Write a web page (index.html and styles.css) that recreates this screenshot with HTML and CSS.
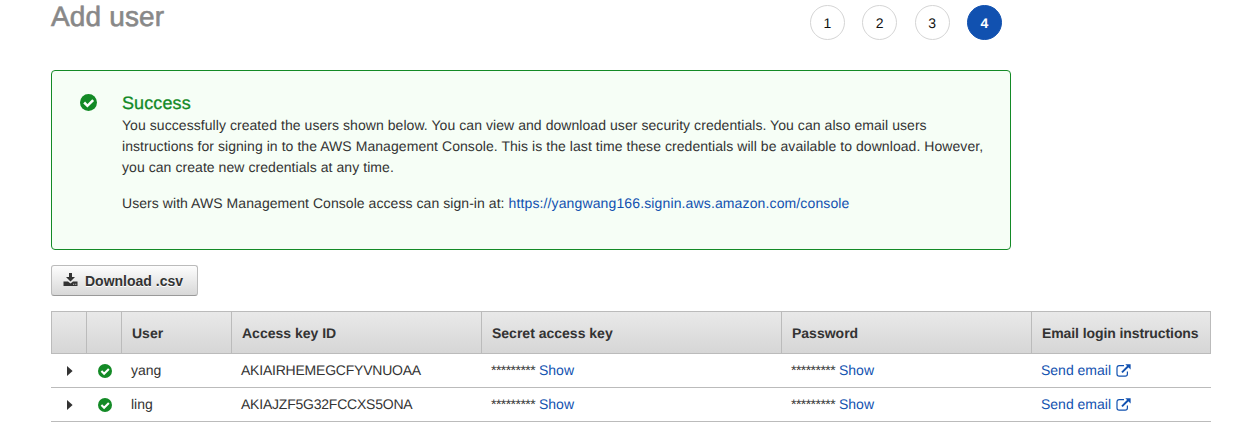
FILE: index.html
```html
<!DOCTYPE html>
<html lang="en">
<head>
<meta charset="utf-8">
<title>Add user</title>
<link rel="stylesheet" href="styles.css">
</head>
<body>
<svg class="sprite" width="0" height="0">
  <symbol id="check" viewBox="0 0 16 16"><circle cx="8" cy="8" r="8" fill="#138a26"/><path d="M3.9 8 7 11.1 12.4 5.7" fill="none" stroke="#fff" stroke-width="2.4"/></symbol>
  <symbol id="external" viewBox="0 0 15 13"><path d="M8 1.7H3.2Q1 1.7 1 3.9V10Q1 12.2 3.2 12.2H9.2Q11.4 12.2 11.4 10V7.6" fill="none" stroke="currentColor" stroke-width="1.2"/><path d="M6 8.4 12.4 2" stroke="currentColor" stroke-width="1.9"/><path d="M9.3.3H14.6V5.6Z" fill="currentColor"/></symbol>
</svg>
<header class="top">
  <h1 class="title">Add user</h1>
  <ol class="steps">
    <li class="step">1</li>
    <li class="step">2</li>
    <li class="step">3</li>
    <li class="step active">4</li>
  </ol>
</header>
<main>
  <section class="alert">
    <svg class="alert-icon"><use href="#check"/></svg>
    <div class="alert-body">
      <h2 class="alert-title">Success</h2>
      <p class="line">You successfully created the users shown below. You can view and download user security credentials. You can also email users<br>instructions for signing in to the AWS Management Console. This is the last time these credentials will be available to download. However,<br>you can create new credentials at any time.</p>
      <p class="line">Users with AWS Management Console access can sign-in at: <a class="signin" href="#">https://yangwang166.signin.aws.amazon.com/console</a></p>
    </div>
  </section>
  <button class="download">
    <svg class="download-icon" viewBox="0 0 15 13"><path fill="currentColor" d="M6 0H9V4H12L7.5 8.5 3 4H6Z"/><path fill="currentColor" fill-rule="evenodd" d="M.5 8.5H5L7.5 10.5 10 8.5H14.5V13H.5ZM10.2 10.7V11.8H11.2V10.7ZM12.3 10.7V11.8H13.3V10.7Z"/></svg>
    <span>Download .csv</span>
  </button>
  <table class="users">
    <colgroup><col class="c-icon"><col class="c-icon"><col class="c-user"><col class="c-key"><col class="c-secret"><col class="c-password"><col class="c-email"></colgroup>
    <thead>
      <tr><th></th><th></th><th>User</th><th>Access key ID</th><th>Secret access key</th><th>Password</th><th class="email-head">Email login instructions</th></tr>
    </thead>
    <tbody>
      <tr>
        <td><svg class="caret" viewBox="0 0 6 10"><path d="M0 0 5.6 5 0 10Z"/></svg></td>
        <td><svg class="ok"><use href="#check"/></svg></td>
        <td>yang</td><td class="key">AKIAIRHEMEGCFYVNUOAA</td>
        <td><span class="mask">*********</span> <a href="#">Show</a></td>
        <td><span class="mask">*********</span> <a href="#">Show</a></td>
        <td><a href="#">Send email <svg class="ext"><use href="#external"/></svg></a></td>
      </tr>
      <tr>
        <td><svg class="caret" viewBox="0 0 6 10"><path d="M0 0 5.6 5 0 10Z"/></svg></td>
        <td><svg class="ok"><use href="#check"/></svg></td>
        <td>ling</td><td class="key">AKIAJZF5G32FCCXS5ONA</td>
        <td><span class="mask">*********</span> <a href="#">Show</a></td>
        <td><span class="mask">*********</span> <a href="#">Show</a></td>
        <td><a href="#">Send email <svg class="ext"><use href="#external"/></svg></a></td>
      </tr>
    </tbody>
  </table>
</main>
</body>
</html>
```
FILE: styles.css
```css
* { box-sizing: border-box; }
body {
  margin: 0;
  padding: 0 24px 0 51px;
  background: #fff;
  color: #333;
  font: 14px/21px "Liberation Sans", Arial, sans-serif;
  text-rendering: geometricPrecision;
  overflow: hidden;
}
a { color: #1151b0; text-decoration: none; }
.sprite { position: absolute; }
.top {
  display: flex;
  justify-content: space-between;
  width: 951px;
  height: 70px;
}
.title {
  margin: 0;
  color: #888;
  font-size: 28px;
  font-weight: 400;
  line-height: 34px;
  letter-spacing: .15px;
  -webkit-text-stroke: .6px #888;
}
.steps {
  display: flex;
  gap: 17.4px;
  margin: 0;
  padding: 5px 0 0;
  list-style: none;
}
.step {
  width: 35px;
  height: 35px;
  border: 1px solid #d5d5d5;
  border-radius: 50%;
  color: #111;
  line-height: 34px;
  text-align: center;
}
.step.active {
  border-color: #1151b0;
  background: #1151b0;
  color: #fff;
  font-weight: 700;
}
.alert {
  display: flex;
  width: 960px;
  height: 180px;
  padding: 22px 0 0 27.5px;
  border: 1px solid #138a26;
  border-radius: 4px;
  background: #f6fef6;
}
.alert-icon { width: 17px; height: 17px; margin: .5px 25.5px 0 0; }
.alert-body { white-space: nowrap; }
.alert-title {
  margin: 0;
  padding-bottom: 1px;
  color: #138a26;
  font-size: 18px;
  font-weight: 400;
  line-height: 21px;
  letter-spacing: .1px;
  -webkit-text-stroke: .3px #138a26;
}
.line { margin: 0 0 15px; letter-spacing: .06px; }
.signin { letter-spacing: .13px; }
.download {
  display: flex;
  align-items: center;
  gap: 7px;
  width: 147px;
  height: 31px;
  margin: 15px 0;
  padding: 0 0 0 11px;
  border: 1px solid #bbb;
  border-bottom-color: #999;
  border-radius: 3px;
  background: linear-gradient(#fdfdfd, #d8d8d8);
  color: #333;
  font: bold 14px/21px "Liberation Sans", Arial, sans-serif;
  text-shadow: 0 1px 0 #fff;
}
.download span { padding-top: 2px; }
.download-icon { width: 15px; height: 13px; margin-bottom: 2px; }
.users {
  width: 1160px;
  border-collapse: separate;
  border-spacing: 0;
  table-layout: fixed;
}
.c-icon { width: 35px; }
.c-user { width: 110px; }
.c-key { width: 250px; }
.c-secret { width: 300px; }
.c-password { width: 250px; }
.c-email { width: 180px; }
.users th {
  height: 43px;
  padding: 2px 0 0 10px;
  border: solid #bbb;
  border-width: 1px 0 1px 1px;
  background: linear-gradient(#e9e9e9, #d6d6d6);
  text-align: left;
  white-space: nowrap;
}
.users th:last-child { border-right-width: 1px; }
.users .email-head { letter-spacing: -.09px; }
.users td {
  height: 34px;
  padding: 0 0 1px 10px;
  border-bottom: 1px solid #bbb;
  white-space: nowrap;
}
.key { letter-spacing: -.22px; }
.mask { letter-spacing: -.55px; }
.users svg { display: block; }
.users .caret { width: 6px; height: 10px; margin: 1px 0 0 6px; fill: #333; }
.users .ok { width: 14px; height: 14px; margin: 1px 0 0 2px; }
.users .ext {
  display: inline-block;
  width: 15px;
  height: 13px;
  margin-left: 1px;
  vertical-align: -2px;
}
```
